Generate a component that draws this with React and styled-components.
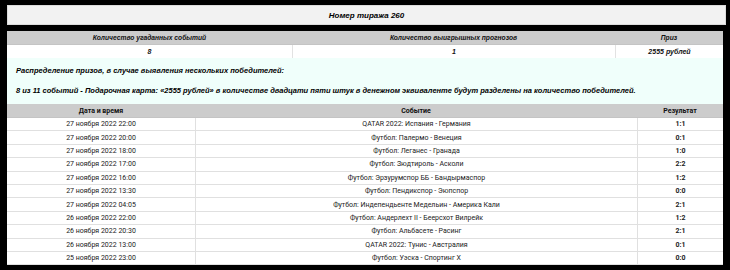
import React from "react"
import styled, { createGlobalStyle } from "styled-components"

const GlobalStyle = createGlobalStyle`
  html, body {
    margin: 0;
    padding: 0;
    background: #000;
  }
`

const Page = styled.div`
  width: 730px;
  height: 270px;
  box-sizing: border-box;
  padding: 5px 4px 0 7px;
  background: #000;
  overflow: hidden;
  font-family: "Liberation Sans", Arial, sans-serif;
`

const TitleBar = styled.div`
  height: 20px;
  box-sizing: border-box;
  background: #f2f2f2;
  border: 1px solid #dcdcdc;
  display: flex;
  align-items: center;
  justify-content: center;
  font-size: 8px;
  font-weight: 700;
  font-style: italic;
  color: #000;
`

const Section = styled.div`
  margin-top: 6px;
  width: 716px;
  background: #fff;
`

const Table = styled.div`
  display: grid;
  grid-template-columns: ${(p) => p.$cols};
`

const HeadCell = styled.div`
  height: 14px;
  display: flex;
  align-items: center;
  justify-content: center;
  background: #cccccc;
  font-family: ${(p) => (p.$plain ? "Roboto, sans-serif" : "inherit")};
  font-size: ${(p) => (p.$plain ? "7px" : "6.7px")};
  font-weight: 700;
  font-style: ${(p) => (p.$plain ? "normal" : "italic")};
  color: #111;
  border-bottom: 1px solid #c4c4c4;
  box-sizing: border-box;
`

const ValueCell = styled.div`
  height: 13px;
  display: flex;
  align-items: center;
  justify-content: center;
  font-size: 7px;
  font-weight: 700;
  font-style: italic;
  color: #111;
  border-left: ${(p) => (p.$first ? "none" : "1px solid #e2e2e2")};
  box-sizing: border-box;
`

const Info = styled.div`
  height: 46px;
  box-sizing: border-box;
  background: #f0fffb;
  padding: 8px 0 0 9px;
  font-size: 7.5px;
  font-weight: 700;
  font-style: italic;
  color: #000;
  display: flex;
  flex-direction: column;
  gap: 11px;
`

const Cell = styled.div`
  height: 13.4px;
  box-sizing: border-box;
  display: flex;
  align-items: center;
  justify-content: center;
  font-family: Roboto, sans-serif;
  font-size: 7px;
  font-weight: ${(p) => (p.$bold ? 700 : 400)};
  color: #222;
  background: #fff;
  border-bottom: 1px solid #e0e0e0;
  border-left: ${(p) => (p.$first ? "none" : "1px solid #e0e0e0")};
`

const events = [
  ["27 ноября 2022 22:00", "QATAR 2022: Испания - Германия", "1:1"],
  ["27 ноября 2022 20:00", "Футбол: Палермо - Венеция", "0:1"],
  ["27 ноября 2022 18:00", "Футбол: Леганес - Гранада", "1:0"],
  ["27 ноября 2022 17:00", "Футбол: Зюдтироль - Асколи", "2:2"],
  ["27 ноября 2022 16:00", "Футбол: Эрзурумспор ББ - Бандырмаспор", "1:2"],
  ["27 ноября 2022 13:30", "Футбол: Пендикспор - Эюпспор", "0:0"],
  ["27 ноября 2022 04:05", "Футбол: Индепендьенте Медельин - Америка Кали", "2:1"],
  ["26 ноября 2022 22:00", "Футбол: Андерлехт II - Беерсхот Вилрейк", "1:2"],
  ["26 ноября 2022 20:30", "Футбол: Альбасете - Расинг", "2:1"],
  ["26 ноября 2022 13:00", "QATAR 2022: Тунис - Австралия", "0:1"],
  ["25 ноября 2022 23:00", "Футбол: Уэска - Спортинг Х", "0:0"],
]

export default function App() {
  return (
    <Page>
      <GlobalStyle />
      <TitleBar>Номер тиража 260</TitleBar>
      <Section>
        <Table $cols="285px 323px 108px">
          <HeadCell>Количество угаданных событий</HeadCell>
          <HeadCell>Количество выигрышных прогнозов</HeadCell>
          <HeadCell>Приз</HeadCell>
          <ValueCell $first>8</ValueCell>
          <ValueCell>1</ValueCell>
          <ValueCell>2555 рублей</ValueCell>
        </Table>
        <Info>
          <div>Распределение призов, в случае выявления нескольких победителей:</div>
          <div>
            8 из 11 событий - Подарочная карта: «2555 рублей» в количестве двадцати пяти штук в
            денежном эквиваленте будут разделены на количество победителей.
          </div>
        </Info>
        <Table $cols="188px 442px 86px">
          <HeadCell $plain>Дата и время</HeadCell>
          <HeadCell $plain>Событие</HeadCell>
          <HeadCell $plain>Результат</HeadCell>
          {events.map(([date, name, score]) => (
            <React.Fragment key={date + name}>
              <Cell $first>{date}</Cell>
              <Cell>{name}</Cell>
              <Cell $bold>{score}</Cell>
            </React.Fragment>
          ))}
        </Table>
      </Section>
    </Page>
  )
}
